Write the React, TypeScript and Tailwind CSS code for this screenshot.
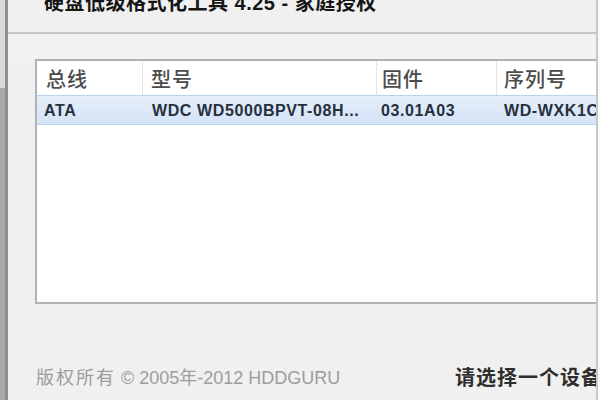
import React from "react";

const font = "font-['Liberation_Sans','Noto_Sans_CJK_SC',sans-serif]";

export default function App() {
  return (
    <div className={`w-[600px] h-[400px] overflow-hidden flex bg-[#f0f0f0] ${font}`}>
      {/* left edge strip */}
      <div className="w-[8px] shrink-0 flex">
        <div className="w-[5px] flex flex-col">
          <div className="h-[88px] bg-[#d8d8d8]" />
          <div className="flex-1 bg-[#a9a9a9]" />
        </div>
        <div className="w-[3px] bg-[#8f8f8f]" />
      </div>

      {/* main */}
      <div className="flex-1 flex flex-col min-w-0">
        <div className="h-[32px] overflow-hidden">
          <div className="-mt-[10px] pl-[36px] text-[20px] leading-[26px] font-bold text-[#151515] whitespace-nowrap tracking-[0.5px]">
            硬盘低级格式化工具 4.25 - 家庭授权
          </div>
        </div>
        <div className="h-[2px] bg-[#c6c6c6]" />
        <div className="h-[25px] bg-[#f2f2f2]" />

        {/* table */}
        <div className="ml-[27px] h-[245px] border-2 border-r-0 border-[#b2b2b2] bg-white flex flex-col">
          <div className="h-[34px] flex text-[20px] tracking-[1px] font-medium text-[#4c4c4c] whitespace-nowrap">
            <div className="w-[106px] shrink-0 pl-[9px] pt-[4px] flex items-center border-r border-[#e4e4e4]">总线</div>
            <div className="w-[234px] shrink-0 pl-[8px] pt-[4px] flex items-center border-r border-[#e4e4e4]">型号</div>
            <div className="w-[120px] shrink-0 pl-[5px] pt-[4px] flex items-center border-r border-[#e4e4e4]">固件</div>
            <div className="flex-1 pl-[7px] pt-[4px] flex items-center">序列号</div>
          </div>
          <div className="h-[30px] flex text-[16px] tracking-[0.6px] font-bold text-[#26303d] whitespace-nowrap bg-gradient-to-b from-[#e6effb] to-[#d4e3f7] border-y border-[#b9d3f1]">
            <div className="w-[106px] shrink-0 pl-[7px] pt-[1px] flex items-center">ATA</div>
            <div className="w-[234px] shrink-0 pl-[9px] pt-[1px] flex items-center">WDC WD5000BPVT-08H...</div>
            <div className="w-[120px] shrink-0 pl-[4px] pt-[1px] flex items-center">03.01A03</div>
            <div className="flex-1 pl-[7px] pt-[1px] flex items-center overflow-hidden">WD-WXK1C</div>
          </div>
          <div className="flex-1" />
        </div>

        {/* footer */}
        <div className="flex-1 flex items-end pb-[11px] whitespace-nowrap">
          <div className="pl-[28px] w-[447px] shrink-0 text-[18px] leading-[22px] text-[#9d9d9d]">
            <span className="tracking-[2px]">版权所有</span> © 2005年-2012 HDDGURU
          </div>
          <div className="shrink-0 text-[20px] leading-[22px] text-[#2e2e2e] font-bold tracking-[1px]">
            请选择一个设备
          </div>
        </div>
      </div>

      {/* right edge */}
      <div className="w-[2px] shrink-0 bg-[#c9c9c9]" />
      <div className="w-[2px] shrink-0 bg-[#fafafa]" />
    </div>
  );
}
